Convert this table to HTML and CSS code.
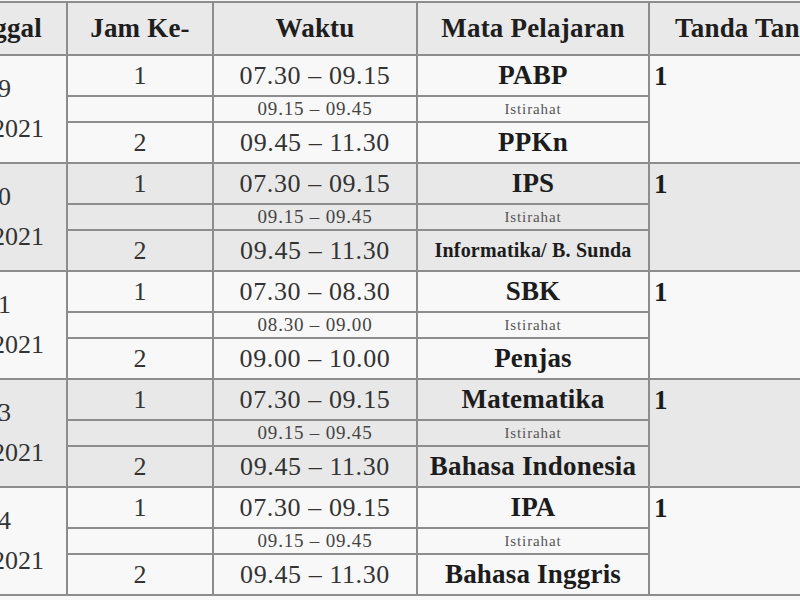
FILE: index.html
```html
<!DOCTYPE html>
<html lang="id">
<head>
<meta charset="utf-8">
<title>Jadwal</title>
<link rel="stylesheet" href="styles.css">
</head>
<body>
<div class="crop">
<table class="jadwal">
  <colgroup>
    <col class="c-tgl"><col class="c-jam"><col class="c-waktu"><col class="c-mapel"><col class="c-ttd">
  </colgroup>
  <thead>
    <tr class="head">
      <th>Tanggal</th><th>Jam Ke-</th><th>Waktu</th><th>Mata Pelajaran</th><th>Tanda Tangan</th>
    </tr>
  </thead>
  <tbody class="grp-a">
    <tr class="r-main">
      <td rowspan="3" class="tgl"><span class="d1">Senin, 19</span><span class="d2">April 2021</span></td>
      <td class="jam">1</td><td class="waktu">07.30 – 09.15</td><td class="mapel">PABP</td>
      <td rowspan="3" class="ttd">1</td>
    </tr>
    <tr class="r-break"><td></td><td class="waktu-s">09.15 – 09.45</td><td class="ist">Istirahat</td></tr>
    <tr class="r-main"><td class="jam">2</td><td class="waktu">09.45 – 11.30</td><td class="mapel">PPKn</td></tr>
  </tbody>
  <tbody class="grp-b">
    <tr class="r-main">
      <td rowspan="3" class="tgl"><span class="d1">Selasa, 20</span><span class="d2">April 2021</span></td>
      <td class="jam">1</td><td class="waktu">07.30 – 09.15</td><td class="mapel">IPS</td>
      <td rowspan="3" class="ttd">1</td>
    </tr>
    <tr class="r-break"><td></td><td class="waktu-s">09.15 – 09.45</td><td class="ist">Istirahat</td></tr>
    <tr class="r-main"><td class="jam">2</td><td class="waktu">09.45 – 11.30</td><td class="mapel small">Informatika/ B. Sunda</td></tr>
  </tbody>
  <tbody class="grp-a">
    <tr class="r-main">
      <td rowspan="3" class="tgl"><span class="d1">Rabu, 21</span><span class="d2">April 2021</span></td>
      <td class="jam">1</td><td class="waktu">07.30 – 08.30</td><td class="mapel">SBK</td>
      <td rowspan="3" class="ttd">1</td>
    </tr>
    <tr class="r-break"><td></td><td class="waktu-s">08.30 – 09.00</td><td class="ist">Istirahat</td></tr>
    <tr class="r-main"><td class="jam">2</td><td class="waktu">09.00 – 10.00</td><td class="mapel">Penjas</td></tr>
  </tbody>
  <tbody class="grp-b">
    <tr class="r-main">
      <td rowspan="3" class="tgl"><span class="d1">Jumat, 23</span><span class="d2">April 2021</span></td>
      <td class="jam">1</td><td class="waktu">07.30 – 09.15</td><td class="mapel">Matematika</td>
      <td rowspan="3" class="ttd">1</td>
    </tr>
    <tr class="r-break"><td></td><td class="waktu-s">09.15 – 09.45</td><td class="ist">Istirahat</td></tr>
    <tr class="r-main"><td class="jam">2</td><td class="waktu">09.45 – 11.30</td><td class="mapel">Bahasa Indonesia</td></tr>
  </tbody>
  <tbody class="grp-a">
    <tr class="r-main">
      <td rowspan="3" class="tgl"><span class="d1">Sabtu, 24</span><span class="d2">April 2021</span></td>
      <td class="jam">1</td><td class="waktu">07.30 – 09.15</td><td class="mapel">IPA</td>
      <td rowspan="3" class="ttd">1</td>
    </tr>
    <tr class="r-break"><td></td><td class="waktu-s">09.15 – 09.45</td><td class="ist">Istirahat</td></tr>
    <tr class="r-main"><td class="jam">2</td><td class="waktu">09.45 – 11.30</td><td class="mapel">Bahasa Inggris</td></tr>
  </tbody>
</table>
</div>
</body>
</html>
```

FILE: styles.css
```css
html, body {
  margin: 0;
  padding: 0;
  background: #f7f7f7;
}
body {
  width: 800px;
  height: 600px;
  overflow: hidden;
  font-family: "Liberation Serif", "Times New Roman", serif;
  color: #222;
}
.crop {
  width: 800px;
  height: 600px;
  overflow: hidden;
}
.jadwal {
  border-collapse: collapse;
  table-layout: fixed;
  width: 1100px;
  margin-left: -164px;
  margin-top: 1px;
}
.c-tgl { width: 230px; }
.c-jam { width: 146px; }
.c-waktu { width: 204px; }
.c-mapel { width: 232px; }
.c-ttd { width: 288px; }

.jadwal th, .jadwal td {
  border: 2px solid #8d8d8d;
  padding: 0;
  text-align: center;
  vertical-align: middle;
  white-space: nowrap;
}
.head th {
  height: 51px;
  background: #e9e9e9;
  font-size: 27px;
  font-weight: bold;
  color: #1e1e1e;
  letter-spacing: 0.2px;
}
.head th:first-child {
  text-align: right;
  padding-right: 24px;
}
.head th:last-child {
  text-align: left;
  padding-left: 25px;
}
.grp-a td { background: #f8f8f8; }
.grp-b td { background: #e8e8e8; }

.r-main td { height: 39px; }
.r-break td { height: 24px; }

.jadwal td.tgl {
  font-size: 26px;
  color: #333;
  line-height: 40px;
  text-align: right;
}
.tgl span { display: block; }
.tgl .d1 { padding-right: 55px; }
.tgl .d2 { padding-right: 22px; }

.jam {
  font-size: 26px;
  color: #333;
}
.waktu {
  font-size: 26px;
  color: #333;
  letter-spacing: 0.6px;
}
.waktu-s {
  font-size: 19px;
  color: #444;
  letter-spacing: 0.8px;
}
.mapel {
  font-size: 27px;
  font-weight: bold;
  color: #1c1c1c;
  letter-spacing: 0.2px;
}
.mapel.small {
  font-size: 20px;
  letter-spacing: 0.2px;
}
.ist {
  font-size: 15px;
  color: #555;
  letter-spacing: 0.9px;
}
.jadwal td.ttd {
  vertical-align: top;
  text-align: left;
  padding: 0 4px;
  font-size: 27px;
  font-weight: bold;
  line-height: 40px;
  color: #1c1c1c;
}
```
